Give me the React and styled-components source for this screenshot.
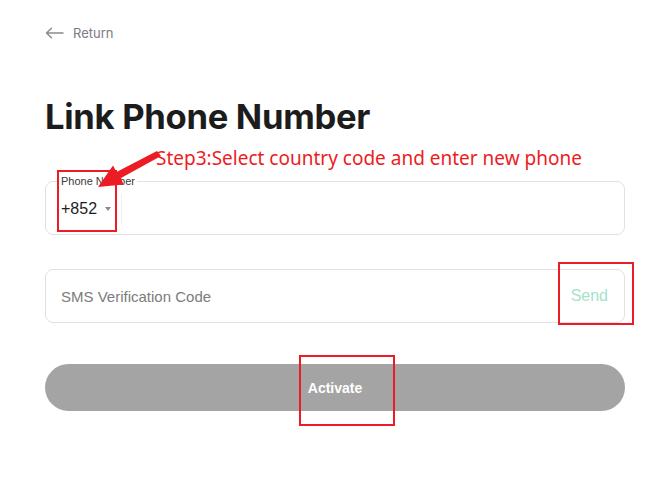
import React from "react";
import styled, { createGlobalStyle } from "styled-components";

const Global = createGlobalStyle`
  html, body { margin: 0; padding: 0; background: #fff; }
  body { font-family: "Liberation Sans", Arial, sans-serif; }
`;

const Page = styled.div`
  position: relative;
  width: 663px;
  height: 489px;
  padding: 24px 38px 0 45px;
  box-sizing: border-box;
  overflow: hidden;
`;

const Back = styled.div`
  display: flex;
  align-items: center;
  gap: 9px;
  height: 17px;
  color: #7a7a80;
  font-family: Inter, sans-serif;
  font-size: 13px;
`;

const Title = styled.h1`
  margin: 55px 0 0;
  font-family: Inter, sans-serif;
  font-weight: 700;
  font-size: 34.6px;
  letter-spacing: -0.3px;
  color: #1c1c1c;
  line-height: 40px;
`;

const Form = styled.div`
  display: flex;
  flex-direction: column;
  padding-top: 45px;
`;

const Field = styled.div`
  position: relative;
  margin-bottom: ${(p) => p.$gap}px;
  padding: 0 15px;
  height: 54px;
  box-sizing: border-box;
  border: 1px solid #e1e1e1;
  border-radius: 8px;
  display: flex;
  align-items: center;
`;

const Legend = styled.span`
  position: absolute;
  left: 13px;
  top: -8px;
  padding: 0 2px;
  background: #fff;
  font-size: 11px;
  color: #3a3a3a;
  line-height: 14px;
`;

const Code = styled.div`
  display: flex;
  align-items: center;
  gap: 8px;
  font-size: 16px;
  color: #1e1e1e;
  padding-right: 10px;
  margin-top: 2px;
  height: 30px;
  border-right: 1px solid #efefef;
`;

const Caret = styled.span`
  width: 0;
  height: 0;
  border-left: 3.5px solid transparent;
  border-right: 3.5px solid transparent;
  border-top: 4px solid #8a8a8a;
`;

const Placeholder = styled.div`
  flex: 1;
  font-size: 15px;
  color: #7c7c7c;
`;

const Send = styled.div`
  font-size: 16px;
  color: #a3e3cb;
  margin-right: 1px;
`;

const Button = styled.div`
  height: 47px;
  border-radius: 24px;
  background: #a4a4a4;
  color: #fff;
  font-weight: 700;
  font-size: 14px;
  display: flex;
  align-items: center;
  justify-content: center;
`;

const Note = styled.div`
  position: absolute;
  left: 156px;
  top: 146px;
  font-family: "Noto Sans", sans-serif;
  font-size: 19px;
  color: #ec1c24;
  white-space: nowrap;
  line-height: 24px;
`;

const Box = styled.div`
  position: absolute;
  left: ${(p) => p.$x}px;
  top: ${(p) => p.$y}px;
  width: ${(p) => p.$w}px;
  height: ${(p) => p.$h}px;
  border: 2px solid #ec1c24;
  box-sizing: border-box;
`;

const Arrow = styled.svg`
  position: absolute;
  left: 0;
  top: 0;
  pointer-events: none;
`;

export default function App() {
  return (
    <>
      <Global />
      <Page>
        <Back>
          <svg width="19" height="12" viewBox="0 0 19 12" fill="none">
            <path d="M18 6H2M6.5 1.2L1.5 6l5 4.8" stroke="#8a8a8f" strokeWidth="1.4" strokeLinecap="round" strokeLinejoin="round" />
          </svg>
          <span>Return</span>
        </Back>
        <Title>Link Phone Number</Title>
        <Form>
          <Field $gap={34}>
            <Legend>Phone Number</Legend>
            <Code>
              +852 <Caret />
            </Code>
          </Field>
          <Field $gap={41}>
            <Placeholder>SMS Verification Code</Placeholder>
            <Send>Send</Send>
          </Field>
          <Button>Activate</Button>
        </Form>

        <Note>Step3:Select country code and enter new phone</Note>
        <Box $x={57} $y={170} $w={60} $h={62} />
        <Box $x={558} $y={262} $w={76} $h={63} />
        <Box $x={299} $y={355} $w={96} $h={71} />
        <Arrow width="663" height="489" viewBox="0 0 663 489">
          <path d="M157 151 L161 156 L121 178 L123.5 184.5 L98 187 L113 165.5 L116.5 172 Z" fill="#ec1c24" />
        </Arrow>
      </Page>
    </>
  );
}
